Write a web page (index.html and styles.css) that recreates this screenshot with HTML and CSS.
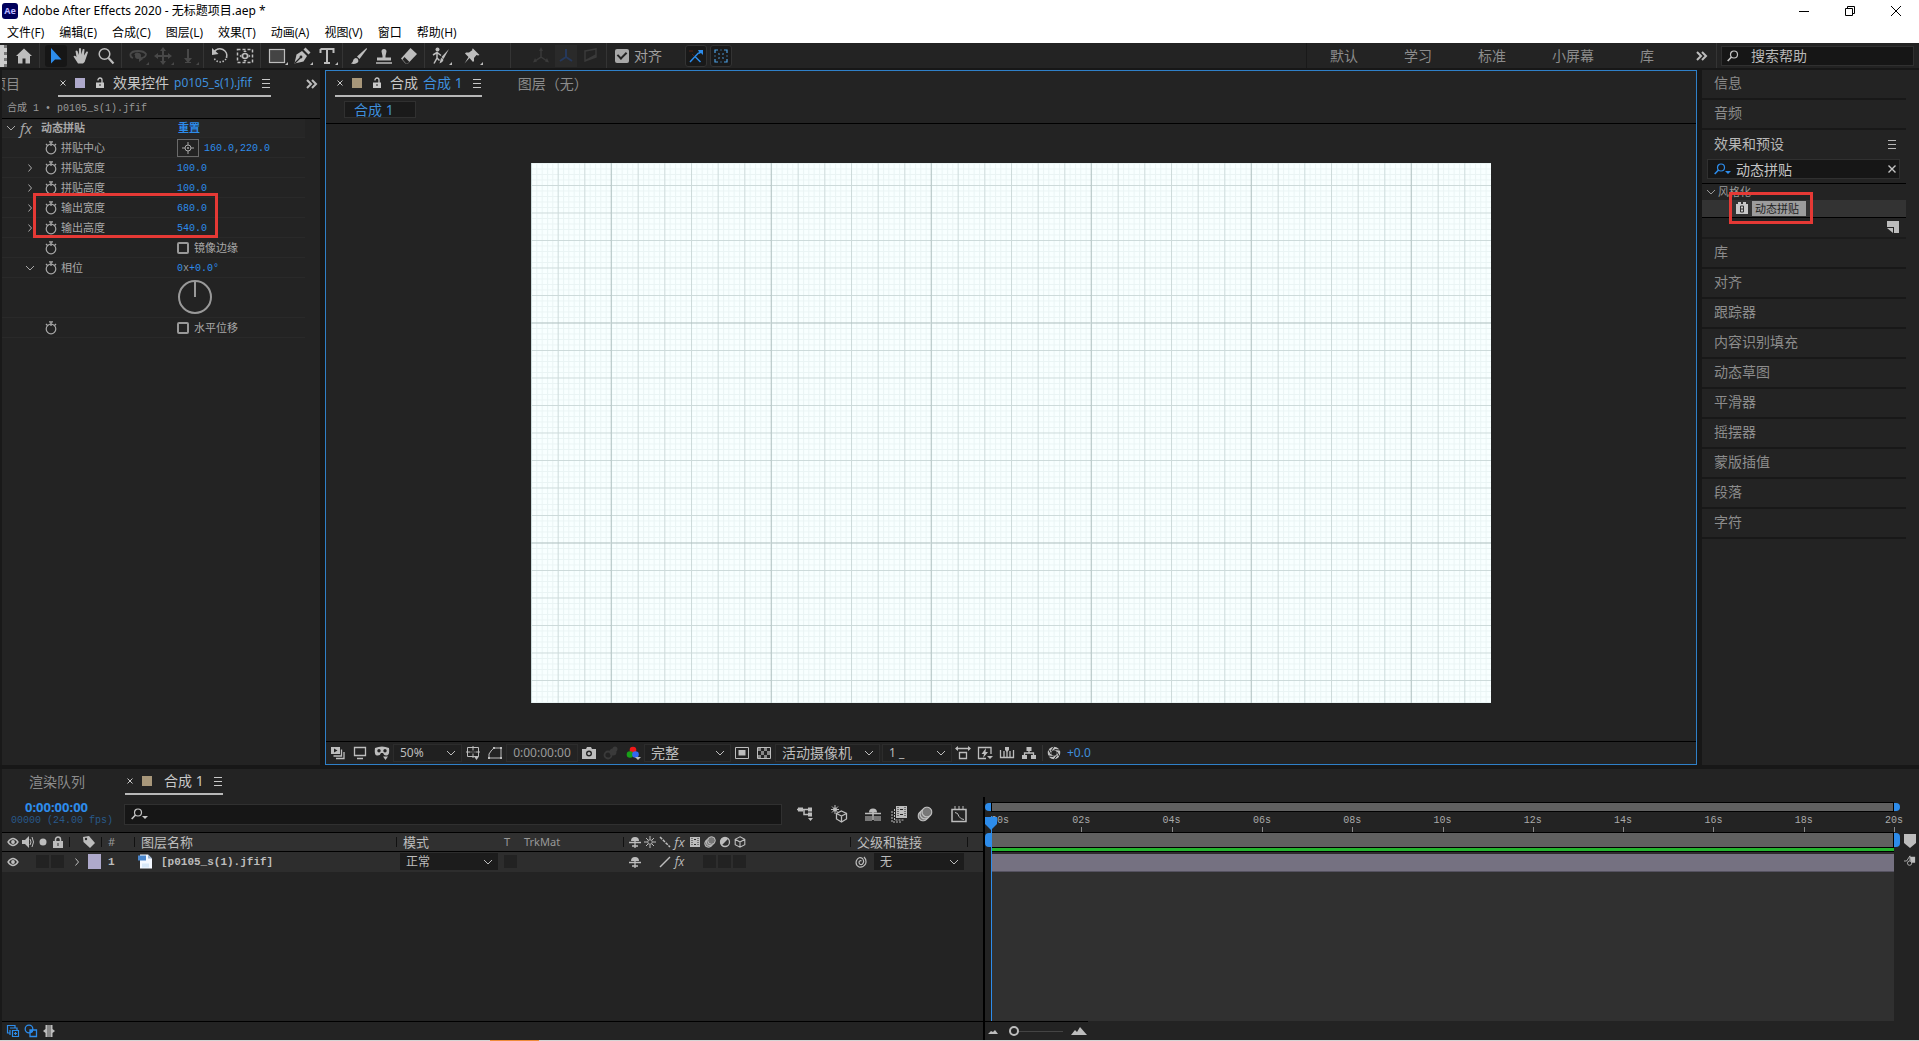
FILE: index.html
```html
<!DOCTYPE html>
<html lang="zh-CN">
<head>
  <meta charset="UTF-8" />
  <meta name="viewport" content="width=device-width, initial-scale=1.0"/>
  <title>Adobe After Effects 2020 - 无标题项目.aep *</title>
  <link rel="stylesheet" href="styles.css">
</head>
<body>
  <!-- shared icons -->
  <svg class="sprite" aria-hidden="true">
    <symbol id="i-down" viewBox="0 0 10 10"><path d="M1 3l4 4 4-4" fill="none" stroke="currentColor"/></symbol>
    <symbol id="i-right" viewBox="0 0 10 10"><path d="M3.500 1.500l3 3.500-3 3.500" fill="none" stroke="currentColor"/></symbol>
    <symbol id="i-close" viewBox="0 0 10 10"><path d="M2.500 2.500l5 5m0-5l-5 5" fill="none" stroke="currentColor"/></symbol>
    <symbol id="i-menu" viewBox="0 0 10 10"><path d="M1 1.500h8M1 5.500h8M1 9.500h8" stroke="currentColor"/></symbol>
    <symbol id="i-more" viewBox="0 0 12 10"><path d="M1 1l4 4-4 4M6 1l4 4-4 4" fill="none" stroke="currentColor" stroke-width="2"/></symbol>
    <symbol id="i-unlock" viewBox="0 0 10 12"><path d="M1 5.500h8V11H1z" fill="currentColor"/><path d="M3 3.500V3a2 2 0 0 1 4 0v3" fill="none" stroke="currentColor" stroke-width="1.300"/><path d="M4.500 7h1v2h-1z" fill="#232323"/></symbol>
    <symbol id="i-lock" viewBox="0 0 10 12"><path d="M0 5h10v7H0z" fill="currentColor"/><path d="M2.500 5V3.500a2.500 2.500 0 0 1 5 0V5" fill="none" stroke="currentColor" stroke-width="1.500"/><path d="M4.500 7h1v3h-1z" fill="#303030"/></symbol>
    <symbol id="i-search" viewBox="0 0 12 12"><circle cx="7" cy="4.500" r="3.500" fill="none" stroke="currentColor" stroke-width="1.200"/><path d="M4.500 7L.7 11" stroke="currentColor" stroke-width="1.600"/></symbol>
    <symbol id="i-search-menu" viewBox="0 0 17 12"><circle cx="7" cy="4.500" r="3.500" fill="none" stroke="currentColor" stroke-width="1.200"/><path d="M4.500 7L.7 11" stroke="currentColor" stroke-width="1.600"/><path d="M11 8h6l-3 3z" fill="currentColor"/></symbol>
    <symbol id="i-watch" viewBox="0 0 12 14"><circle cx="6" cy="8" r="4.800" fill="none" stroke="currentColor" stroke-width="1.200"/><path d="M4 .8h4M6 1v4M1 3l1.500 1.500M11 3L9.500 4.500" stroke="currentColor" stroke-width="1.300" fill="none"/></symbol>
    <symbol id="i-eye" viewBox="0 0 12 10"><path d="M1 5q5-7 10 0-5 7-10 0z" fill="none" stroke="currentColor" stroke-width="1.300"/><circle cx="6" cy="5" r="1.900" fill="currentColor"/></symbol>
    <symbol id="i-shy" viewBox="0 0 12 12"><path d="M2 5a4 4 0 0 1 8 0z" fill="currentColor"/><path d="M0 6.500h12M6 5v7M3 10h6" stroke="currentColor" stroke-width="1.300"/></symbol>
    <symbol id="i-film" viewBox="0 0 12 12"><path d="M1 1h10v10H1z" fill="currentColor"/><path d="M3 2v8M9 2v8" stroke="#303030" stroke-width="1" stroke-dasharray="1 1"/><path d="M5 3.500h2M5 8.500h2" stroke="#303030"/></symbol>
    <symbol id="i-blur" viewBox="0 0 12 12"><circle cx="4.500" cy="7.500" r="3.800" fill="#777" stroke="currentColor"/><circle cx="6" cy="6" r="3.800" fill="#777" stroke="currentColor"/><circle cx="7.500" cy="4.500" r="3.800" fill="#777" stroke="currentColor"/></symbol>
    <symbol id="i-cube" viewBox="0 0 12 12"><path d="M6 .8l4.800 2.500v5.400L6 11.200 1.200 8.700V3.300zM1.200 3.300L6 6l4.800-2.700M6 6v5" fill="none" stroke="currentColor" stroke-width="1.100"/></symbol>
  </svg>

  <header class="titlebar">
    <svg class="app-icon" viewBox="0 0 16 16"><rect width="16" height="16" rx="3" fill="#00005b"/><text x="8" y="11" text-anchor="middle" class="logo-text">Ae</text></svg>
    <span class="title">Adobe After Effects 2020 - 无标题项目.aep *</span>
    <div class="window-buttons">
      <button aria-label="最小化"><svg viewBox="0 0 12 12"><path d="M1 6.500h10" stroke="#000"/></svg></button>
      <button aria-label="还原"><svg viewBox="0 0 12 12"><path d="M1.500 3.500h7v7h-7zM3.500 3.500v-2h7v7h-2" fill="none" stroke="#000"/></svg></button>
      <button aria-label="关闭"><svg viewBox="0 0 12 12"><path d="M1 1l10 10M11 1L1 11" stroke="#000"/></svg></button>
    </div>
  </header>
  <nav class="menubar">
    <button>文件(F)</button><button>编辑(E)</button><button>合成(C)</button><button>图层(L)</button><button>效果(T)</button><button>动画(A)</button><button>视图(V)</button><button>窗口</button><button>帮助(H)</button>
  </nav>

  <div class="toolbar">
    <div class="grip"></div>
    <div class="tools">
      <button class="tool" aria-label="主页"><svg viewBox="0 0 18 18"><path d="M9 1.500L1 9h2v7.500h4.500v-5h3v5H15V9h2z" fill="currentColor"/></svg></button>
      <i class="sep"></i>
      <button class="tool active" aria-label="选取工具"><svg viewBox="0 0 18 18"><path d="M4 1v15.500l4-4h6.500z" fill="#2d8ceb"/></svg></button>
      <button class="tool" aria-label="手形工具"><svg viewBox="0 0 18 18"><path d="M6 16.500L1.500 9.500q1-1.500 3 .5L3.500 4q1-1.200 2 0l1.300 4L7 1.500q1-1.200 2 0l.3 6 1.400-5.200q1.300-.8 1.800.3L12 8.500l2.500-4q1.500-.3 1.500.8l-2.500 7.200q-.5 3-2.500 4z" fill="currentColor"/></svg></button>
      <button class="tool" aria-label="缩放工具"><svg viewBox="0 0 18 18"><circle cx="7.500" cy="7" r="5.300" fill="none" stroke="currentColor" stroke-width="1.500"/><path d="M11.500 11l5 5.500" stroke="currentColor" stroke-width="2.200"/></svg></button>
      <i class="sep"></i>
      <button class="tool dim" aria-label="环绕工具"><svg viewBox="0 0 18 18"><path d="M4 11q-3-1-2.500-4Q3 4 9 4t8 3q0 4-7 4.500M6 8q2-3 5 0" fill="none" stroke="currentColor" stroke-width="1.800"/><circle cx="9" cy="9" r="3" fill="currentColor"/><path d="M10 9v6l4-3z" fill="currentColor"/></svg></button>
      <button class="tool dim" aria-label="平移工具"><svg viewBox="0 0 18 18"><path d="M9 2v14M2 9h14" stroke="currentColor" stroke-width="2"/><path d="M9 0l3 4H6zM9 18l3-4H6zM0 9l4-3v6zM18 9l-4-3v6z" fill="currentColor"/></svg></button>
      <button class="tool dim" aria-label="推拉工具"><svg viewBox="0 0 18 18"><path d="M9 2v10" stroke="currentColor" stroke-width="2"/><path d="M5 11h8l-4 5zM6 15h6v1H6z" fill="currentColor"/></svg></button>
      <i class="sep"></i>
      <button class="tool" aria-label="旋转工具"><svg viewBox="0 0 18 18"><path d="M3 5a7 7 0 0 1 12.500 6" fill="none" stroke="currentColor" stroke-width="1.700"/><path d="M15 12a7 7 0 0 1-12-1" fill="none" stroke="currentColor" stroke-width="1.500" stroke-dasharray="1.500 1.500"/><path d="M1 1v7l6.500-1z" fill="currentColor"/></svg></button>
      <button class="tool" aria-label="锚点工具"><svg viewBox="0 0 18 18"><rect x="1.500" y="2.500" width="15" height="13" fill="none" stroke="currentColor" stroke-width="1.500" stroke-dasharray="3 2"/><circle cx="9" cy="9" r="2.500" fill="none" stroke="currentColor" stroke-width="1.500"/><path d="M9 3l1.800 2H7.200zM9 15l1.800-2H7.200zM3.500 9l2-1.800v3.600zM14.500 9l-2-1.800v3.600z" fill="currentColor"/></svg></button>
      <i class="sep"></i>
      <button class="tool sub" aria-label="矩形工具"><svg viewBox="0 0 18 18"><rect x="1.500" y="2.500" width="15" height="13" fill="#444" stroke="currentColor" stroke-width="1.200"/></svg></button>
      <button class="tool sub" aria-label="钢笔工具"><svg viewBox="0 0 18 18"><path d="M1.500 16.500l2-9L9 4l5 5-3.500 5.500z" fill="currentColor"/><path d="M10.500 2.500l5 5 2-2-5-5z" fill="currentColor"/><path d="M2 16l5.500-5.500" stroke="#232323" stroke-width="1.200"/><circle cx="8" cy="10" r="1.400" fill="#232323"/></svg></button>
      <button class="tool sub" aria-label="文字工具"><svg viewBox="0 0 18 18"><path d="M2.500 2h13v4M9 2v14M2.500 2v4M6 16h6" fill="none" stroke="currentColor" stroke-width="2"/></svg></button>
      <i class="sep"></i>
      <button class="tool" aria-label="画笔工具"><svg viewBox="0 0 18 18"><path d="M16.500 1L7 9.500 9.500 12 17 2z" fill="currentColor"/><path d="M1 16.500q2-1 2.500-4Q5 10 7.500 11.500q2 3-.5 4.500-3 1.500-6 .5z" fill="currentColor"/></svg></button>
      <button class="tool" aria-label="仿制图章工具"><svg viewBox="0 0 18 18"><path d="M6.500 4.500a2.500 2.500 0 1 1 5 0L10.500 9v1.500H16v3H2v-3h5.500V9z" fill="currentColor"/><path d="M1 16h16" stroke="currentColor" stroke-width="1.500"/></svg></button>
      <button class="tool" aria-label="橡皮擦工具"><svg viewBox="0 0 18 18"><path d="M10.500 1L17 7l-9 9.500H5.500L1 11.500z" fill="currentColor"/><path d="M4.500 10l5 5-2 1.500H6l-3.500-4z" fill="#232323"/></svg></button>
      <i class="sep"></i>
      <button class="tool sub" aria-label="Roto 笔刷工具"><svg viewBox="0 0 18 18"><circle cx="5.500" cy="2.500" r="2" fill="currentColor"/><path d="M1 8l4-2.500 4 3M5 5.500V11l-3 5.500M5 11l2.500 2.500" fill="none" stroke="currentColor" stroke-width="1.500"/><path d="M17 2l-7.500 8 2 2zM9 11q2 0 2.500 2-1 3-4 3.500z" fill="currentColor"/></svg></button>
      <button class="tool sub pin" aria-label="人偶位置控点工具"><svg viewBox="0 0 18 18"><path d="M10 1.500l6.500 6.500-1.500.5-1.500-.5-2.500 3v3l-1 1-3.500-4-5 5.500 4-6.500-3.500-3.500 1-1h3l3.500-2.500-.5-1z" fill="currentColor"/></svg></button>
      <i class="sep wide"></i>
      <button class="tool faint" aria-label="本地轴模式"><svg viewBox="0 0 18 18"><path d="M9 2v8L3 14M9 10l6 4" fill="none" stroke="currentColor" stroke-width="1.500"/><path d="M9 0l2 4H7zM1 15.500L3 11l2 3.500zM17 15.500L15 11l-2 3.500z" fill="currentColor"/></svg></button>
      <button class="tool faint axis" aria-label="世界轴模式"><svg viewBox="0 0 18 18"><path d="M9 2v8L3 14M9 10l6 4" fill="none" stroke="#25385c" stroke-width="2"/></svg></button>
      <button class="tool faint" aria-label="视图轴模式"><svg viewBox="0 0 18 18"><path d="M3 4l11-2v8L3 14zM14 2v6L3 14" fill="none" stroke="currentColor" stroke-width="1.500"/></svg></button>
      <i class="sep"></i>
      <label class="snap"><input type="checkbox" checked>对齐</label>
      <button class="tool toggle" aria-label="对齐边缘"><svg viewBox="0 0 18 18"><path d="M3 15l5-5.500L13.500 15M8 9.500l3.500-3.500" fill="none" stroke="#2d8ceb" stroke-width="1.500"/><path d="M11 3h5v5l-2-2-2 1-1-1 1-1z" fill="#2d8ceb"/><path d="M2 4h4M5 7l2 2" stroke="#5a2418"/></svg></button>
      <button class="tool toggle" aria-label="对齐要素"><svg viewBox="0 0 18 18"><path d="M3 6V3h3M12 3h3v3M3 12v3h3M12 15h3v-3M8.500 3h1M8.500 15h1M3 8.500v1M15 8.500v1M6.500 6.500l1 1M11.500 6.500l-1 1M6.500 11.500l1-1M11.500 11.500l-1-1" fill="none" stroke="#4d9edf" stroke-width="1.200"/></svg></button>
    </div>
    <nav class="workspaces">
      <button>默认</button><button>学习</button><button>标准</button><button>小屏幕</button><button>库</button>
    </nav>
    <button class="more" aria-label="更多工作区"><svg><use href="#i-more"/></svg></button>
    <i class="sep"></i>
    <label class="field help-search"><svg class="ic12"><use href="#i-search"/></svg><input type="text" placeholder="搜索帮助" aria-label="搜索帮助"></label>
  </div>

  <main class="workspace">
    <section class="panel effect-controls">
      <div class="tabs">
        <button class="tab cut">项目</button>
        <div class="tab current">
          <svg class="ic10"><use href="#i-close"/></svg><i class="chip lilac"></i><svg class="lock"><use href="#i-unlock"/></svg>
          <span>效果控件</span><span class="link file">p0105_s(1).jfif</span><svg class="ic10 burger"><use href="#i-menu"/></svg>
        </div>
        <button class="more" aria-label="更多面板"><svg><use href="#i-more"/></svg></button>
      </div>
      <div class="path">合成 1 • p0105_s(1).jfif</div>
      <div class="props">
        <div class="prop heading"><svg class="ic10"><use href="#i-down"/></svg><em class="fx">fx</em><b>动态拼贴</b><button class="reset">重置</button></div>
        <div class="prop"><span></span><svg class="watch"><use href="#i-watch"/></svg><span>拼贴中心</span><div class="value"><button class="target" aria-label="拾取中心点"><svg viewBox="0 0 12 12"><circle cx="6" cy="6" r="3" fill="none" stroke="#aaa"/><circle cx="6" cy="6" r="1" fill="#aaa"/><path d="M6 0v3M6 9v3M0 6h3M9 6h3" stroke="#aaa"/></svg></button><span class="num">160.0<i>,</i>220.0</span></div></div>
        <div class="prop"><svg class="ic10"><use href="#i-right"/></svg><svg class="watch"><use href="#i-watch"/></svg><span>拼贴宽度</span><span class="num">100.0</span></div>
        <div class="prop"><svg class="ic10"><use href="#i-right"/></svg><svg class="watch"><use href="#i-watch"/></svg><span>拼贴高度</span><span class="num">100.0</span></div>
        <div class="output-size">
          <div class="prop"><svg class="ic10"><use href="#i-right"/></svg><svg class="watch"><use href="#i-watch"/></svg><span>输出宽度</span><span class="num">680.0</span></div>
          <div class="prop"><svg class="ic10"><use href="#i-right"/></svg><svg class="watch"><use href="#i-watch"/></svg><span>输出高度</span><span class="num">540.0</span></div>
        </div>
        <div class="prop"><span></span><svg class="watch"><use href="#i-watch"/></svg><span></span><label class="value"><input type="checkbox">镜像边缘</label></div>
        <div class="prop"><svg class="ic10"><use href="#i-down"/></svg><svg class="watch"><use href="#i-watch"/></svg><span>相位</span><span class="num">0<i>x</i>+0.0°</span></div>
        <div class="prop dial-row"><svg class="dial" viewBox="0 0 36 36"><circle cx="18" cy="18" r="16" fill="none" stroke="#999" stroke-width="2"/><path d="M18 2v16" stroke="#999" stroke-width="2"/></svg></div>
        <div class="prop"><span></span><svg class="watch"><use href="#i-watch"/></svg><span></span><label class="value"><input type="checkbox">水平位移</label></div>
      </div>
    </section>

    <section class="panel viewer">
      <div class="tabs">
        <div class="tab current">
          <svg class="ic10"><use href="#i-close"/></svg><i class="chip sand"></i><svg class="lock"><use href="#i-unlock"/></svg>
          <span>合成</span><span class="link">合成 1</span><svg class="ic10 burger"><use href="#i-menu"/></svg>
        </div>
        <button class="tab">图层（无）</button>
      </div>
      <div class="crumbs"><button>合成 1</button></div>
      <div class="stage">
        <svg class="canvas" viewBox="0 0 960 540" preserveAspectRatio="xMidYMid slice">
          <defs>
            <pattern id="fine" width="5.333" height="5.500" patternUnits="userSpaceOnUse"><path d="M0 .5h6M.5 0v6" stroke="#5a8a8a" stroke-opacity=".09"/></pattern>
            <pattern id="mid" width="26.667" height="27.500" y="22" patternUnits="userSpaceOnUse"><path d="M0 .5h27M.5 0v28" stroke="#4a6464" stroke-opacity=".18"/></pattern>
            <pattern id="big" x="79" y="159" width="160" height="220" patternUnits="userSpaceOnUse"><path d="M0 1h160M1 0v220" stroke="#4a6464" stroke-opacity=".11" stroke-width="2"/></pattern>
          </defs>
          <rect width="960" height="540" fill="#f8ffff"/>
          <rect width="960" height="540" fill="url(#fine)"/>
          <rect width="960" height="540" fill="url(#mid)"/>
          <rect width="960" height="540" fill="url(#big)"/>
        </svg>
      </div>
      <div class="view-bar">
        <button aria-label="始终预览此视图"><svg viewBox="0 0 16 14"><path d="M1 1h9v7H1z" fill="currentColor"/><path d="M4 2.500v4l3.500-2z" fill="#232323"/><path d="M11.500 3.500v6.500h-8M14 6v6.500H6" fill="none" stroke="currentColor" stroke-width="1.300"/></svg></button>
        <button aria-label="主查看器"><svg viewBox="0 0 16 14"><path d="M2.500 1.500h11v8h-11zM5 12.500h6" fill="none" stroke="currentColor" stroke-width="1.300"/></svg></button>
        <button aria-label="VR 视图"><svg viewBox="0 0 16 14"><path d="M1 2q7-3 14 0 1 8-3 7.500-2 0-3-2.500H7q-1 3-4 2.500-3 0-2-7.500z" fill="currentColor"/><circle cx="5" cy="4.800" r="1.700" fill="#232323"/><circle cx="11" cy="4.800" r="1.700" fill="#232323"/><path d="M9 10.500h5L11.500 14z" fill="currentColor"/></svg></button>
        <label class="select zoom"><select aria-label="放大率"><option>50%</option></select><svg><use href="#i-down"/></svg></label>
        <button aria-label="网格和参考线"><svg viewBox="0 0 16 14"><path d="M2.500 1.500h11v9h-11zM8 0v12M1 6h14" fill="none" stroke="currentColor"/><path d="M5 6h6M8 4v4" stroke="#232323"/><path d="M9 10.500h5L11.500 14z" fill="currentColor"/></svg></button>
        <button aria-label="蒙版可见性"><svg viewBox="0 0 16 14"><path d="M2 12V8q3-5 5-6h7v10z" fill="none" stroke="currentColor"/><path d="M1 11h2v2H1zM13 11h2v2h-2zM13 1h2v2h-2zM6 1h2v2H6z" fill="currentColor"/></svg></button>
        <button class="timecode">0:00:00:00</button>
        <button aria-label="拍摄快照"><svg viewBox="0 0 16 14"><path d="M1 3h4l1-2h4l1 2h4v10H1z" fill="currentColor"/><circle cx="8" cy="7.500" r="3" fill="#232323"/><circle cx="8" cy="7.500" r="1.600" fill="currentColor"/></svg></button>
        <button class="faint" aria-label="显示快照"><svg viewBox="0 0 16 14"><circle cx="5" cy="9" r="3.500" fill="none" stroke="currentColor" stroke-width="1.800"/><circle cx="10" cy="6" r="3.500" fill="currentColor"/><circle cx="12" cy="3" r="2.500" fill="currentColor"/></svg></button>
        <button aria-label="通道"><svg viewBox="0 0 16 14"><circle cx="8" cy="4" r="3.300" fill="#f01818"/><circle cx="5" cy="8.500" r="3.300" fill="#18a018"/><circle cx="10.500" cy="8.500" r="3.300" fill="#3468f0"/><path d="M10 11h6l-3 3z" fill="#bbb"/></svg></button>
        <label class="select res"><select aria-label="分辨率"><option>完整</option></select><svg><use href="#i-down"/></svg></label>
        <button aria-label="目标区域"><svg viewBox="0 0 16 14"><path d="M1.500 1.500h13v11h-13z" fill="none" stroke="currentColor"/><path d="M4.500 4h7v5.500h-7z" fill="currentColor"/></svg></button>
        <button aria-label="透明网格"><svg viewBox="0 0 16 14"><path d="M1.500 1.500h13v11h-13z" fill="none" stroke="currentColor"/><path d="M2 2h3v3H2zM8 2h3v3H8zM5 5h3v4H5zM11 5h3v4h-3zM2 9h3v3H2zM8 9h3v3H8z" fill="#888"/></svg></button>
        <label class="select camera"><select aria-label="3D 视图"><option>活动摄像机</option></select><svg><use href="#i-down"/></svg></label>
        <label class="select layout"><select aria-label="选择视图布局"><option>1 _</option></select><svg><use href="#i-down"/></svg></label>
        <button aria-label="像素长宽比校正"><svg viewBox="0 0 16 14"><path d="M1 2.500h14M4.500 6.500h7v6h-7z" fill="none" stroke="currentColor" stroke-width="1.300"/><path d="M0 2.500L3 0v5zM16 2.500L13 0v5z" fill="currentColor"/></svg></button>
        <button aria-label="快速预览"><svg viewBox="0 0 16 14"><path d="M14 8V1.500H1.500v11H9" fill="none" stroke="currentColor" stroke-width="1.300"/><path d="M9 2L4.500 8H7l-1 4 5-6H8.500zM10 10h6l-3 3z" fill="currentColor"/></svg></button>
        <button aria-label="时间轴"><svg viewBox="0 0 16 14"><path d="M1.500 4v7.500h13V4M5 5v6M11 5v6M8 2v9" fill="none" stroke="currentColor" stroke-width="1.300"/><path d="M6 1h4v3L8 6 6 4z" fill="currentColor"/></svg></button>
        <button aria-label="合成流程图"><svg viewBox="0 0 16 14"><path d="M5.500 1h5v4h-5zM1 9h5v4H1zM10 9h5v4h-5z" fill="currentColor"/><path d="M8 5v2M3.500 9V7h9v2" fill="none" stroke="currentColor" stroke-width="1.300"/></svg></button>
        <i class="sep"></i>
        <button aria-label="重置曝光度"><svg viewBox="0 0 16 14"><circle cx="8" cy="7" r="4.500" fill="none" stroke="currentColor" stroke-width="3.500"/><path d="M8 .5L5 5M14 4l-5.500-.5M13.500 10.500L11 6M8 13.500l3-4M2 10l5.500.5M2.500 3.500L5 8" stroke="#232323"/></svg></button>
        <span class="exposure">+0.0</span>
      </div>
    </section>

    <aside class="dock">
      <button class="dock-item">信息</button>
      <button class="dock-item">音频</button>
      <section class="presets">
        <h2>效果和预设<svg class="ic10"><use href="#i-menu"/></svg></h2>
        <label class="field"><svg class="ic-search"><use href="#i-search-menu"/></svg><input type="text" value="动态拼贴" aria-label="搜索效果"><svg class="clear"><use href="#i-close"/></svg></label>
        <div class="category"><svg class="ic10"><use href="#i-down"/></svg>风格化</div>
        <div class="result">
          <span class="hit"><svg viewBox="0 0 12 12"><path d="M0 2h2V0h3v2h2V0h3v2h2v10H0z" fill="#c8c8c8"/><path d="M4.500 4h3v6h-3zM4.500 7h3" fill="none" stroke="#333"/></svg><mark>动态拼贴</mark></span>
        </div>
        <div class="presets-foot"><svg viewBox="0 0 12 12"><path d="M0 0h12v12H7V6H0z" fill="#bdbdbd"/><path d="M0 7h6v5z" fill="#bdbdbd"/></svg></div>
      </section>
      <button class="dock-item">库</button>
      <button class="dock-item">对齐</button>
      <button class="dock-item">跟踪器</button>
      <button class="dock-item">内容识别填充</button>
      <button class="dock-item">动态草图</button>
      <button class="dock-item">平滑器</button>
      <button class="dock-item">摇摆器</button>
      <button class="dock-item">蒙版插值</button>
      <button class="dock-item">段落</button>
      <button class="dock-item">字符</button>
    </aside>
  </main>

  <section class="panel timeline">
    <div class="tabs">
      <button class="tab queue">渲染队列</button>
      <div class="tab current">
        <svg class="ic10"><use href="#i-close"/></svg><i class="chip sand"></i><span>合成 1</span><svg class="ic10 burger"><use href="#i-menu"/></svg>
      </div>
    </div>
    <div class="timeline-body">
      <div class="layers">
        <div class="time-row">
          <div class="clock"><strong>0:00:00:00</strong><span>00000 (24.00 fps)</span></div>
          <label class="field"><svg class="ic-search"><use href="#i-search-menu"/></svg><input type="text" aria-label="搜索图层"></label>
          <div class="comp-switches">
            <button aria-label="合成微型流程图"><svg viewBox="0 0 18 18"><path d="M1 4.500h13M8 4.500v5h6" fill="none" stroke="currentColor" stroke-width="1.500"/><path d="M2 2.500h5v4H2zM12 2.500h4v4h-4zM12 7.500h4v4h-4zM12 13h5l-2.500 3z" fill="currentColor"/></svg></button>
            <button aria-label="草图 3D"><svg viewBox="0 0 18 18"><path d="M5 0v9M1 4.500h8M2 1.500l6 6M8 1.500l-6 6" stroke="currentColor"/><circle cx="5" cy="4.500" r="2" fill="currentColor"/><path d="M11.500 6l5 2.500v5.500l-5 3-5-3V8.500zM6.500 8.500l5 2.500 5-2.500M11.500 11v6" fill="#232323" stroke="currentColor" stroke-width="1.300"/></svg></button>
            <button aria-label="隐藏图层"><svg viewBox="0 0 18 18"><path d="M5 7.500a4 4 0 0 1 8 0z" fill="currentColor"/><path d="M1 8.500h16M9 7v8" stroke="currentColor" stroke-width="1.500"/><path d="M1 11h7v5H1zM10 11h7v5h-7z" fill="#777"/></svg></button>
            <button aria-label="帧混合"><svg viewBox="0 0 18 18"><path d="M6 1h11v12H6z" fill="currentColor"/><path d="M8 2v10M15 2v10" stroke="#232323" stroke-dasharray="1 1"/><path d="M10 4.500h3M10 9.500h3" stroke="#232323"/><path d="M4.500 4v11H14M2 6v11h10" fill="none" stroke="currentColor" stroke-dasharray="2 1"/></svg></button>
            <button aria-label="运动模糊"><svg viewBox="-1 -1 14 14"><use href="#i-blur" width="12" height="12"/></svg></button>
            <button class="graph" aria-label="图表编辑器"><svg viewBox="0 0 18 18"><path d="M2 4.500h14v12H2z" fill="none" stroke="currentColor" stroke-width="1.500"/><path d="M5 1v3M9 1v3M13 1v3" stroke="currentColor"/><path d="M5 7.500q3 0 4 4 2 3 5 3" fill="none" stroke="currentColor"/></svg></button>
          </div>
        </div>
        <table class="layer-table">
          <colgroup><col class="c-av"><col class="c-tag"><col class="c-num"><col class="c-name"><col class="c-mode"><col class="c-t"><col class="c-trk"><col class="c-sw"><col class="c-parent"><col></colgroup>
          <thead>
            <tr>
              <th><div class="av"><svg><use href="#i-eye"/></svg><svg viewBox="0 0 12 12"><path d="M0 4h3l4-4v12L3 8H0z" fill="currentColor"/><path d="M8 3q2 3 0 6M10 1q3 5 0 10" fill="none" stroke="currentColor"/></svg><svg viewBox="0 0 12 12"><circle cx="6" cy="6" r="3.500" fill="currentColor"/></svg><svg><use href="#i-lock"/></svg></div></th>
              <th class="tag"><svg class="ic12" viewBox="0 0 12 12"><path d="M0 1l6-1 6 7-5 5-6.500-6z" fill="currentColor"/><circle cx="3" cy="3" r="1.200" fill="#303030"/></svg></th>
              <th class="small">#</th>
              <th>图层名称</th>
              <th>模式</th>
              <th class="plain small">T</th>
              <th class="plain small">TrkMat</th>
              <th>
                <div class="switches"><svg><use href="#i-shy"/></svg><svg viewBox="0 0 12 12"><circle cx="6" cy="6" r="2.300" fill="none" stroke="currentColor"/><path d="M6 0v3M6 9v3M0 6h3M9 6h3M2 2l2 2M8 8l2 2M10 2L8 4M4 8l-2 2" stroke="currentColor"/></svg><svg viewBox="0 0 12 12"><path d="M1 1l10 10" stroke="currentColor" stroke-width="1.500" stroke-dasharray="3 1"/></svg><em class="fx">fx</em><svg><use href="#i-film"/></svg><svg><use href="#i-blur"/></svg><svg viewBox="0 0 12 12"><circle cx="6" cy="6" r="4.500" fill="none" stroke="currentColor" stroke-width="1.300"/><path d="M9.200 2.800A4.500 4.500 0 0 0 2.800 9.200z" fill="currentColor"/></svg><svg><use href="#i-cube"/></svg></div>
              </th>
              <th>父级和链接</th>
              <th></th>
            </tr>
          </thead>
          <tbody>
            <tr>
              <td><div class="av"><svg><use href="#i-eye"/></svg><span></span><i class="box"></i><i class="box"></i></div></td>
              <td><div class="label-cell"><svg class="ic10"><use href="#i-right"/></svg><i class="swatch"></i></div></td>
              <td class="mono">1</td>
              <td class="mono flush"><div class="name"><svg viewBox="0 0 14 14"><path d="M2 0h8l4 4v10H2z" fill="#f4f8ff"/><path d="M10 0v4h4z" fill="#9db4d0"/><path d="M0 1h8v5H0z" fill="#4a86cc"/><path d="M4 9h7v4H4z" fill="#d8e8f8"/></svg>[p0105_s(1).jfif]</div></td>
              <td class="flush"><label class="select mode"><select aria-label="模式"><option>正常</option></select><svg><use href="#i-down"/></svg></label></td>
              <td class="plain"><i class="box"></i></td>
              <td></td>
              <td><div class="switches"><svg><use href="#i-shy"/></svg><span></span><svg viewBox="0 0 12 12"><path d="M1 11L11 1" stroke="currentColor" stroke-width="1.500"/></svg><em class="fx">fx</em><span></span><i class="box"></i><i class="box"></i><i class="box"></i></div></td>
              <td><div class="parent"><svg class="ic12" viewBox="0 0 12 12"><path d="M9 1q3 3 1.500 7Q8 12 4 11 0 9 1.500 4.500 4 0 7.500 2.500 10 6 7 8.500 4 9 4 6q1-2 2.500-1" fill="none" stroke="currentColor" stroke-width="1.200"/></svg><label class="select"><select aria-label="父级"><option>无</option></select><svg><use href="#i-down"/></svg></label></div></td>
              <td></td>
            </tr>
          </tbody>
        </table>
        <div class="empty"></div>
      </div>

      <div class="track">
        <div class="navigator"></div>
        <div class="ruler">
          <span class="first">00s</span><span>02s</span><span>04s</span><span>06s</span><span>08s</span><span>10s</span><span>12s</span><span>14s</span><span>16s</span><span>18s</span><span>20s</span>
        </div>
        <div class="work-area"></div>
        <div class="cache"></div>
        <div class="layer-bar"></div>
        <div class="track-area"></div>
        <div class="playhead"><svg viewBox="0 0 12 14"><path d="M0 1h12v7l-6 6-6-6z" fill="#2d8ceb"/></svg></div>
      </div>
      <div class="gutter">
        <svg viewBox="0 0 12 14"><path d="M0 0h12v9l-6 5-6-5z" fill="#bdbdbd"/></svg>
        <svg viewBox="0 0 14 14"><path d="M7 2h6v7H8z" fill="#bdbdbd"/><path d="M0 7h3l4-6v6" fill="none" stroke="#bdbdbd"/><circle cx="6.500" cy="9.500" r="2.500" fill="#232323" stroke="#bdbdbd"/></svg>
      </div>
    </div>
    <div class="timeline-foot">
      <div class="pane-toggles">
        <button aria-label="图层开关"><svg viewBox="0 0 14 14"><path d="M4 9H1.500V1.500H9V4M4 6v5M4 4h7v2M6.500 6.500h6v6h-6zM9.500 8v3M8 9.500h3" fill="none" stroke="#2d8ceb" stroke-width="1.200"/></svg></button>
        <button aria-label="转换控制"><svg viewBox="0 0 14 14"><circle cx="5" cy="5" r="3.800" fill="none" stroke="#2d8ceb" stroke-width="1.300"/><path d="M6 6h6.500v6.500H6z" fill="none" stroke="#2d8ceb" stroke-width="1.300"/><path d="M6 6h3v2L7 9H6z" fill="#2d8ceb"/></svg></button>
        <button aria-label="入点出点"><svg viewBox="0 0 14 14"><path d="M5 1v12H3.500V9L1 7l2.500-2V1zM9 1v12h1.500V9L13 7l-2.500-2V1z" fill="#bdbdbd"/><path d="M5 1h4v12H5z" fill="#888"/></svg></button>
      </div>
      <label class="scale"><svg viewBox="0 0 16 8"><path d="M3 7l3-3 2 1 2-2 3 4z" fill="#bdbdbd"/></svg><input type="range" min="0" max="100" value="0" aria-label="时间缩放"><svg viewBox="0 0 16 8"><path d="M0 8l4-5 2 2 3-5 7 8z" fill="#bdbdbd"/></svg></label>
    </div>
  </section>
  <div class="taskbar-edge"></div>
</body>
</html>
```

FILE: styles.css
```css
* {
  box-sizing: border-box;
}
body {
  margin: 0;
  height: 100vh;
  display: flex;
  flex-direction: column;
  overflow: hidden;
  background: #171717;
  color: #bdbdbd;
  font-family: "Noto Sans", "Noto Sans CJK SC", sans-serif;
  font-size: 12px;
  line-height: 16px;
}
button, input, select {
  font: inherit;
  color: inherit;
  background: none;
  border: none;
  padding: 0;
  margin: 0;
  border-radius: 0;
}
button {
  flex: none;
  white-space: nowrap;
}
svg {
  display: block;
  flex: none;
}
.sprite {
  position: absolute;
  width: 0;
  height: 0;
}
.ic10 {
  width: 10px;
  height: 10px;
}
.ic12 {
  width: 12px;
  height: 12px;
}
.sep {
  width: 1px;
  align-self: stretch;
  background: #343434;
}
.fx {
  font-family: "Open Sans", sans-serif;
  font-style: italic;
}

/* title and menu */
.titlebar {
  height: 22px;
  display: flex;
  align-items: center;
  gap: 5px;
  padding-left: 2px;
  background: #fff;
  color: #000;
}
.app-icon {
  width: 16px;
  height: 16px;
}
.logo-text {
  font: bold 9px "Noto Sans", sans-serif;
  fill: #b9b5ff;
}
.window-buttons {
  margin-left: auto;
  display: flex;
}
.window-buttons button {
  width: 46px;
  height: 22px;
  display: flex;
  justify-content: center;
  align-items: center;
}
.window-buttons svg {
  width: 12px;
  height: 12px;
}
.menubar {
  height: 21px;
  display: flex;
  align-items: center;
  gap: 15px;
  padding-left: 7px;
  background: #fff;
  color: #000;
  font-family: "Open Sans", "Noto Sans CJK SC", sans-serif;
}

/* toolbar */
.toolbar {
  height: 25px;
  margin-bottom: 2px;
  display: flex;
  align-items: center;
  background: #232323;
  padding-right: 5px;
}
.grip {
  width: 7px;
  height: 22px;
  border-right: 3px dotted #777;
  background: #ccc;
}
.tools {
  display: flex;
  align-items: center;
  align-self: stretch;
  padding-left: 4px;
}
.tool {
  width: 22px;
  height: 22px;
  margin: 0 1px 0 2px;
  display: flex;
  justify-content: center;
  align-items: center;
  position: relative;
}
.tool svg {
  width: 18px;
  height: 18px;
}
.tools .sep {
  margin: 0 3px;
}
.tool.active {
  background: #161616;
  border-radius: 3px;
}
.tool.dim {
  color: #484848;
}
.faint {
  color: #3a3a3a;
}
.tool.sub::after, .tool.dim::after {
  content: "";
  position: absolute;
  right: 0;
  bottom: 2px;
  border-left: 3px solid transparent;
  border-bottom: 3px solid currentColor;
}
.tool.pin {
  margin-left: 8px;
}
.tools .sep.wide {
  margin: 0 17px 0 26px;
}
.tool.axis {
  background: #2a2a2a;
}
.snap {
  display: flex;
  align-items: center;
  gap: 5px;
  margin: 0 23px 0 5px;
  font-size: 14px;
  color: #a0a0a0;
}
.snap input {
  appearance: none;
  width: 14px;
  height: 14px;
  border-radius: 2px;
  background: #a8a8a8;
  display: grid;
  place-items: center;
}
.snap input:checked::before {
  content: "";
  width: 4px;
  height: 7px;
  margin-bottom: 2px;
  border: solid #232323;
  border-width: 0 2px 2px 0;
  transform: rotate(45deg);
}
.tool.toggle {
  margin: 0 3px 0 0;
  background: #191919;
  border: 1px solid #333;
  border-radius: 3px;
}
.workspaces {
  margin-left: auto;
  display: flex;
  align-self: stretch;
  align-items: center;
  gap: 46px;
  padding: 0 42px 0 23px;
  border-left: 1px solid #191919;
  font-size: 14px;
  color: #8c8c8c;
}
.more svg {
  width: 12px;
  height: 10px;
}
.toolbar > .sep {
  margin: 0 4px 0 8px;
}
.field {
  display: flex;
  align-items: center;
  background: #161616;
  border: 1px solid #303030;
  font-size: 14px;
  color: #c4c4c4;
}
.field input {
  flex: 1;
  min-width: 0;
  height: 18px;
  outline: none;
}
.field input::placeholder {
  color: #b8b8b8;
  opacity: 1;
}
.help-search {
  width: 193px;
  gap: 12px;
  padding-left: 5px;
}

/* panels */
.workspace {
  flex: 1;
  min-height: 0;
  display: flex;
}
.panel {
  background: #232323;
}
.tabs {
  height: 28px;
  flex: none;
  display: flex;
  align-items: flex-start;
}
.tab {
  height: 26px;
  display: flex;
  align-items: center;
  font-size: 14px;
  color: #8c8c8c;
}
.tab.current {
  border-bottom: 2px solid #b8b8b8;
  color: #c8c8c8;
}
.tab .chip {
  width: 10px;
  height: 10px;
  margin: 0 10px 0 7px;
}
.tab .lock {
  width: 10px;
  height: 12px;
  margin-right: 8px;
}
.tab .link {
  color: #3f8fdc;
  margin-left: 5px;
}
.tab .file {
  font-size: 12px;
}
.tab .burger {
  margin-left: 9px;
}
.lilac {
  background: #aea9cb;
}
.sand {
  background: #a8977a;
}

.effect-controls {
  width: 320px;
  margin-right: 5px;
  padding-top: 1px;
  border-left: 2px solid #191919;
}
.effect-controls .cut {
  width: 18px;
  justify-content: flex-end;
  overflow: hidden;
  margin-right: 38px;
}
.effect-controls .more {
  margin: 8px 2px 0 auto;
}
.path {
  height: 20px;
  padding-left: 5px;
  line-height: 20px;
  font-family: "Liberation Mono", "Noto Sans CJK SC", monospace;
  font-size: 10px;
  color: #999;
  border-bottom: 1px solid #000;
}
.props {
  margin-right: 15px;
  font-size: 11px;
  color: #a8a8a8;
}
.prop {
  height: 20px;
  display: grid;
  grid-template-columns: 20px 16px 116px 1fr;
  align-items: center;
  padding-left: 23px;
  border-bottom: 1px solid #292929;
}
.prop.heading {
  height: 19px;
  grid-template-columns: 14px 21px 137px 1fr;
  padding-left: 4px;
  background: #262626;
}
.prop.heading .fx {
  font-size: 15px;
}
.reset {
  justify-self: start;
  color: #2d8ceb;
  font-weight: bold;
}
.watch {
  width: 12px;
  height: 14px;
}
.value {
  display: flex;
  align-items: center;
  gap: 5px;
}
.num {
  padding-top: 2px;
  font-family: "Liberation Mono", monospace;
  font-size: 10px;
  color: #2d8ceb;
}
.num i {
  font-style: normal;
  color: #999;
}
.target {
  width: 22px;
  height: 18px;
  border: 1px solid #6a6a6a;
  display: grid;
  place-items: center;
}
.target svg {
  width: 12px;
  height: 12px;
}
.value input {
  appearance: none;
  width: 12px;
  height: 12px;
  border: 2px solid #999;
  border-radius: 2px;
}
.prop.dial-row {
  height: 40px;
  display: block;
  padding: 1px 0 0 175px;
}
.dial {
  width: 36px;
  height: 36px;
}
/* red callouts */
.output-size, .hit {
  position: relative;
}
.output-size::after, .hit::after {
  content: "";
  position: absolute;
  border: 3px solid #e53935;
  pointer-events: none;
}
.output-size::after {
  top: -5px;
  bottom: 0;
  left: 31px;
  width: 179px;
}
.hit::after {
  inset: -9px -7px;
}

.viewer {
  flex: 1;
  min-width: 0;
  display: flex;
  flex-direction: column;
  border: 1px solid #2f80c8;
}
.viewer .tabs {
  padding-left: 9px;
  gap: 36px;
}
.crumbs {
  height: 25px;
  padding: 2px 0 0 18px;
  border-bottom: 1px solid #000;
}
.crumbs button {
  width: 72px;
  height: 17px;
  line-height: 15px;
  padding-left: 9px;
  text-align: left;
  font-size: 14px;
  color: #3f8fdc;
  background: #1a1a1a;
  border: 1px solid #303030;
}
.stage {
  flex: 1;
  min-height: 0;
  display: flex;
  justify-content: center;
  align-items: center;
}
.canvas {
  width: 960px;
  height: 540px;
}
.view-bar {
  height: 23px;
  display: flex;
  align-items: center;
  padding-left: 1px;
  border-top: 1px solid #000;
}
.view-bar button {
  width: 22px;
  display: flex;
  justify-content: center;
}
.view-bar button svg {
  width: 16px;
  height: 14px;
}
.view-bar .timecode {
  width: 72px;
  line-height: 16px;
  border: 1px solid #2c2c2c;
  color: #9a9a9a;
}
.select {
  display: grid;
  grid-template-columns: 1fr 10px;
  align-items: center;
  height: 18px;
  padding: 0 5px 0 6px;
  background: #1c1c1c;
  font-size: 14px;
}
.select select {
  grid-area: 1 / 1 / 2 / 3;
  appearance: none;
  width: 100%;
  outline: none;
}
.select svg {
  grid-area: 1 / 2;
  width: 10px;
  height: 10px;
  pointer-events: none;
}
.view-bar .select {
  background: #202020;
  border: 1px solid #2c2c2c;
}
.view-bar .zoom {
  width: 69px;
  font-size: 12px;
}
.view-bar .res {
  width: 87px;
}
.view-bar .camera {
  width: 105px;
  margin-right: 2px;
}
.view-bar .layout {
  width: 70px;
  font-size: 12px;
}
.view-bar .sep {
  margin: 3px 0 3px 2px;
}
.exposure {
  color: #3f8fdc;
  margin-left: 2px;
}

/* right dock */
.dock {
  width: 217px;
  margin-left: 5px;
  padding-right: 13px;
  background: #232323;
}
.dock-item {
  display: block;
  width: 100%;
  height: 30px;
  padding: 0 0 2px 12px;
  text-align: left;
  font-size: 14px;
  color: #8c8c8c;
  border-bottom: 2px solid #181818;
}
.presets {
  border-bottom: 2px solid #1b1b1b;
}
.presets h2 {
  margin: 0;
  height: 29px;
  padding: 0 9px 2px 12px;
  display: flex;
  align-items: center;
  justify-content: space-between;
  font-size: 14px;
  font-weight: normal;
  color: #b8b8b8;
}
.presets .field {
  margin: 0 6px 4px 5px;
  padding-left: 6px;
  gap: 5px;
}
.ic-search {
  width: 17px;
  height: 12px;
}
.presets .ic-search {
  color: #2d8ceb;
}
.clear {
  width: 14px;
  height: 14px;
}
.category {
  height: 17px;
  display: flex;
  align-items: center;
  gap: 2px;
  padding-left: 4px;
  border-top: 1px solid #000;
  font-size: 11px;
  color: #999;
}
.result {
  display: flex;
  height: 18px;
  padding: 1px 0 2px 34px;
  background: #333;
  border-bottom: 1px solid #000;
}
.hit {
  display: flex;
  align-items: center;
  gap: 4px;
}
.hit svg {
  width: 12px;
  height: 12px;
}
.hit mark {
  width: 54px;
  padding-left: 3px;
  background: #9c9c9c;
  color: #222;
  font-size: 11px;
  line-height: 15px;
}
.presets-foot {
  height: 19px;
  display: flex;
  justify-content: flex-end;
  padding: 3px 7px 0 0;
}
.presets-foot svg {
  width: 12px;
  height: 12px;
}

/* timeline */
.timeline {
  height: 271px;
  margin-top: 4px;
  display: flex;
  flex-direction: column;
  border-left: 2px solid #191919;
}
.timeline .queue {
  margin: 0 40px 0 27px;
}
.timeline .chip {
  margin-right: 12px;
}
.timeline-body {
  flex: 1;
  min-height: 0;
  display: flex;
}
.layers {
  width: 983px;
  flex: none;
  display: flex;
  flex-direction: column;
  border-right: 2px solid #000;
}
.time-row {
  height: 35px;
  display: flex;
  align-items: center;
  padding-bottom: 1px;
}
.clock {
  width: 122px;
  display: flex;
  flex-direction: column;
  line-height: 14px;
}
.clock strong {
  padding-left: 23px;
  font-size: 13px;
  color: #2d8ceb;
}
.clock span {
  padding-left: 9px;
  font-family: "Liberation Mono", monospace;
  font-size: 10px;
  color: #28598a;
}
.time-row .field {
  flex: 1;
  height: 21px;
  margin-right: 14px;
  padding-left: 6px;
}
.comp-switches {
  width: 187px;
  display: flex;
  gap: 8px;
}
.comp-switches svg {
  width: 18px;
  height: 18px;
}
.comp-switches button:nth-child(2), .comp-switches button:nth-child(3), .comp-switches .graph {
  margin-left: 8px;
}
.layer-table {
  width: 100%;
  table-layout: fixed;
  border-collapse: collapse;
}
.c-av { width: 67px; }
.c-tag { width: 32px; }
.c-num { width: 33px; }
.c-name { width: 262px; }
.c-mode { width: 104px; }
.c-t { width: 20px; }
.c-trk { width: 103px; }
.c-sw { width: 227px; }
.c-parent { width: 117px; }
.layer-table th {
  height: 19px;
  padding: 0 0 0 7px;
  position: relative;
  text-align: left;
  font-size: 13px;
  font-weight: normal;
  line-height: 16px;
  background: #303030;
  border-top: 1px solid #000;
  border-bottom: 1px solid #000;
}
.layer-table th + th:not(.plain)::before {
  content: "";
  position: absolute;
  left: 0;
  top: 4px;
  bottom: 4px;
  width: 1px;
  background: #111;
}
.layer-table th.small {
  font-size: 11px;
  color: #999;
}
.layer-table th.tag {
  padding-left: 14px;
}
.layer-table th:first-child, .layer-table td:first-child {
  padding-left: 3px;
}
.layer-table td {
  height: 20px;
  padding: 0 0 0 7px;
  background: #2d2d2d;
}
.layer-table td.flush, .layer-table .plain {
  padding-left: 4px;
}
.layer-table .mono {
  font-family: "Liberation Mono", monospace;
  font-size: 11px;
  font-weight: bold;
}
.av {
  display: grid;
  grid-template-columns: repeat(4, 15px);
  align-items: center;
  justify-items: center;
}
.av svg {
  width: 12px;
  height: 12px;
}
.box {
  display: block;
  width: 13px;
  height: 13px;
  background: #222;
}
.label-cell {
  display: flex;
  align-items: center;
  gap: 6px;
  margin-left: -4px;
}
.swatch {
  width: 15px;
  height: 15px;
  background: #aea9cb;
}
.name {
  display: flex;
  align-items: center;
  gap: 9px;
}
.name svg {
  width: 14px;
  height: 15px;
}
.mode, .parent .select {
  font-size: 12px;
  height: 17px;
}
.mode {
  width: 98px;
}
.switches {
  display: grid;
  grid-template-columns: repeat(8, 15px);
  align-items: center;
  justify-items: center;
  margin-left: -3px;
}
.switches svg {
  width: 12px;
  height: 12px;
}
.parent {
  display: flex;
  align-items: center;
  gap: 7px;
  margin-left: -2px;
}
.parent .select {
  width: 90px;
}
.empty {
  flex: 1;
}

.track {
  flex: 1;
  min-width: 0;
  display: flex;
  flex-direction: column;
  position: relative;
  padding: 5px 0 0 6px;
}
.navigator, .work-area {
  background: #606060;
  border-left: 1px solid #000;
  border-right: 1px solid #000;
  position: relative;
}
.navigator {
  height: 10px;
  border-top: 1px solid #000;
  border-bottom: 1px solid #000;
}
.navigator::before, .navigator::after, .work-area::before, .work-area::after {
  content: "";
  position: absolute;
  top: 0;
  bottom: 0;
  width: 6px;
  background: #2d8ceb;
}
.navigator::before, .work-area::before {
  left: -7px;
  border-radius: 4px 0 0 4px;
}
.navigator::after, .work-area::after {
  right: -7px;
  border-radius: 0 4px 4px 0;
}
.ruler {
  height: 20px;
  display: grid;
  grid-template-columns: repeat(10, 1fr) 0;
  font-family: "Liberation Mono", monospace;
  font-size: 10px;
  line-height: 12px;
  color: #aaa;
}
.ruler span {
  position: relative;
  padding-top: 3px;
  margin-left: -9px;
}
.ruler .first {
  padding-left: 9px;
}
.ruler span::after {
  content: "";
  position: absolute;
  left: 9px;
  bottom: 0;
  width: 1px;
  height: 5px;
  background: #888;
}
.work-area {
  height: 16px;
  border-top: 1px solid #000;
  border-bottom: 1px solid #000;
}
.cache {
  height: 4px;
  background: #24b52e;
  border-bottom: 1px solid #000;
}
.layer-bar {
  height: 20px;
  background: #757181;
  border-top: 2px solid #2c2c2c;
  border-bottom: 1px solid #555260;
}
.track-area {
  flex: 1;
  background: #303030;
}
.playhead {
  position: absolute;
  left: 6px;
  top: 19px;
  bottom: 0;
  width: 1px;
  background: #2d8ceb;
}
.playhead svg {
  width: 12px;
  height: 14px;
  margin-left: -6px;
}
.gutter {
  width: 25px;
  flex: none;
  display: flex;
  flex-direction: column;
  align-items: flex-end;
  gap: 6px;
  padding: 37px 3px 0 0;
}
.gutter svg {
  width: 12px;
  height: 14px;
}
.timeline-foot {
  height: 19px;
  flex: none;
  display: flex;
  align-items: center;
}
.pane-toggles {
  width: 983px;
  height: 19px;
  display: flex;
  align-items: center;
  gap: 4px;
  padding-left: 4px;
  border-top: 1px solid #000;
  border-right: 2px solid #000;
}
.pane-toggles svg {
  width: 14px;
  height: 14px;
}
.scale {
  width: 103px;
  height: 19px;
  display: flex;
  align-items: center;
  gap: 8px;
  border-top: 1px solid #000;
}
.scale svg {
  width: 16px;
  height: 8px;
}
.scale input {
  appearance: none;
  width: 54px;
  height: 10px;
  background: linear-gradient(#444, #444) center / 100% 1px no-repeat;
}
.scale input::-webkit-slider-thumb {
  appearance: none;
  width: 10px;
  height: 10px;
  border: 2px solid #bdbdbd;
  border-radius: 50%;
  background: #232323;
}
.taskbar-edge {
  height: 1px;
  background: linear-gradient(to right, #d4d4d4 490px, #ef8c3a 490px 539px, #d4d4d4 539px);
}
```
